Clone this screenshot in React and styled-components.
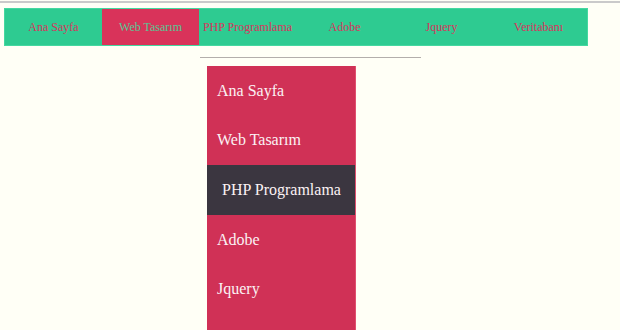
import React from "react";
import styled, { createGlobalStyle } from "styled-components";

const GlobalStyle = createGlobalStyle`
  body {
    margin: 0;
    padding: 0;
    background-color: #fffff6;
  }
`;

const Page = styled.div`
  height: 330px;
  overflow: hidden;
  background-color: #fffff6;
`;

const TopRule = styled.div`
  margin-top: 1px;
  height: 2px;
  background-color: #cacaca;
`;

const NavBar = styled.ul`
  display: flex;
  list-style-type: none;
  box-sizing: border-box;
  width: 584px;
  height: 38px;
  margin: 5px 0 0 4px;
  padding: 0;
  border: 1px solid #45d8a0;
  background-color: #2ecb91;
  font-family: "Liberation Serif", "Times New Roman", serif;
`;

const NavItem = styled.li`
  position: relative;
  flex: 1;
  display: flex;
  justify-content: center;
  align-items: center;
  white-space: nowrap;
  font-size: 12px;
  color: ${(props) => (props.$active ? "#58c694" : "#d8355e")};
  background-color: ${(props) => (props.$active ? "#d9335a" : "transparent")};
`;

const DropRule = styled.div`
  position: absolute;
  top: 48px;
  left: 1px;
  width: 221px;
  height: 1px;
  background-color: #b3aeab;
`;

const DropMenu = styled.ul`
  position: absolute;
  top: 57px;
  left: 8px;
  width: 148px;
  margin: 0;
  padding: 0;
  list-style-type: none;
  background-color: #d03156;
  border-right: 1px solid #e0506f;
`;

const DropItem = styled.li`
  box-sizing: border-box;
  height: 49.6px;
  display: flex;
  align-items: center;
  padding-left: ${(props) => (props.$hover ? "15px" : "10px")};
  font-size: 16px;
  color: #fbf2f4;
  background-color: ${(props) => (props.$hover ? "#3b3640" : "transparent")};
`;

const links = ["Ana Sayfa", "Web Tasarım", "PHP Programlama", "Adobe", "Jquery", "Veritabanı"];
const subLinks = ["Ana Sayfa", "Web Tasarım", "PHP Programlama", "Adobe", "Jquery", "Veritabanı"];

export default function App() {
  return (
    <Page>
      <GlobalStyle />
      <TopRule />
      <NavBar>
        {links.map((label, i) => (
          <NavItem key={label} $active={i === 1}>
            {label}
            {i === 2 && (
              <>
                <DropRule />
                <DropMenu>
                  {subLinks.map((sub, j) => (
                    <DropItem key={sub} $hover={j === 2}>
                      {sub}
                    </DropItem>
                  ))}
                </DropMenu>
              </>
            )}
          </NavItem>
        ))}
      </NavBar>
    </Page>
  );
}
